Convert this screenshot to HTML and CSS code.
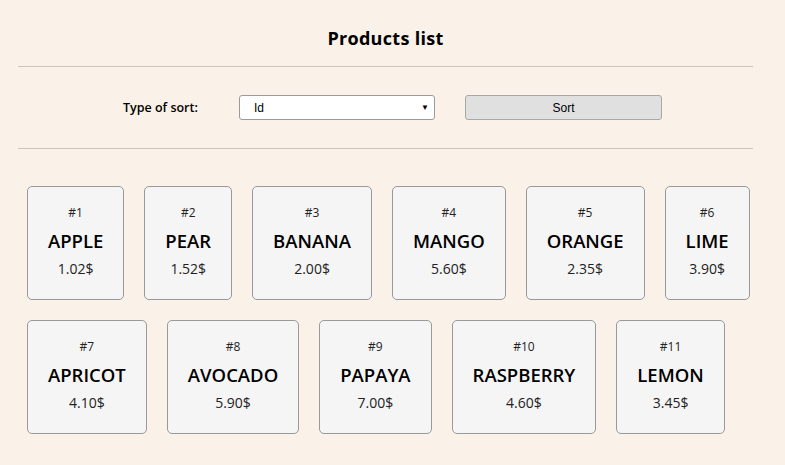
FILE: index.html
```html
<!DOCTYPE html>
<html>
<head>
<meta charset="utf-8">
<link rel="stylesheet" href="styles.css">
</head>
<body>
<div class="page">
  <h1 class="title">Products list</h1>
  <hr class="rule rule-top">
  <div class="controls">
    <label class="sort-label">Type of sort:</label>
    <div class="select"><span>Id</span><span class="arrow">▼</span></div>
    <button class="sort-btn">Sort</button>
  </div>
  <hr class="rule">
  <div class="cards">
    <div class="card"><div class="id">#1</div><div class="name">APPLE</div><div class="price">1.02$</div></div>
    <div class="card"><div class="id">#2</div><div class="name">PEAR</div><div class="price">1.52$</div></div>
    <div class="card"><div class="id">#3</div><div class="name">BANANA</div><div class="price">2.00$</div></div>
    <div class="card"><div class="id">#4</div><div class="name">MANGO</div><div class="price">5.60$</div></div>
    <div class="card"><div class="id">#5</div><div class="name">ORANGE</div><div class="price">2.35$</div></div>
    <div class="card"><div class="id">#6</div><div class="name">LIME</div><div class="price">3.90$</div></div>
    <div class="card"><div class="id">#7</div><div class="name">APRICOT</div><div class="price">4.10$</div></div>
    <div class="card"><div class="id">#8</div><div class="name">AVOCADO</div><div class="price">5.90$</div></div>
    <div class="card"><div class="id">#9</div><div class="name">PAPAYA</div><div class="price">7.00$</div></div>
    <div class="card"><div class="id">#10</div><div class="name">RASPBERRY</div><div class="price">4.60$</div></div>
    <div class="card"><div class="id">#11</div><div class="name">LEMON</div><div class="price">3.45$</div></div>
  </div>
</div>
</body>
</html>
```
FILE: styles.css
```css
html, body {
  margin: 0;
  padding: 0;
  background: #faf1e8;
  font-family: "Open Sans", "DejaVu Sans", sans-serif;
  color: #000;
}
.page {
  width: 735px;
  margin-left: 18px;
  padding-top: 27px;
}
.title {
  margin: 0;
  text-align: center;
  font-size: 18px;
  font-weight: 700;
  line-height: 22px;
  letter-spacing: 0.3px;
}
.rule {
  margin: 0;
  border: 0;
  border-top: 1px solid #c9c5c1;
  height: 0;
}
.rule-top {
  margin-top: 17px;
}
.controls {
  display: flex;
  align-items: center;
  padding-left: 105px;
  height: 81px;
}
.sort-label {
  width: 116px;
  font-size: 12.5px;
  font-weight: 600;
}
.select {
  box-sizing: border-box;
  width: 196px;
  height: 25px;
  background: #fff;
  border: 1px solid #9a9a9a;
  border-radius: 3px;
  display: flex;
  align-items: center;
  justify-content: space-between;
  padding: 0 5px 0 14px;
  font-family: "Liberation Sans", Arial, sans-serif;
  font-size: 12px;
}
.arrow {
  font-size: 8px;
}
.sort-btn {
  box-sizing: border-box;
  margin-left: 30px;
  width: 197px;
  height: 25px;
  background: #e0e0e0;
  border: 1px solid #a8a8a8;
  border-radius: 3px;
  font-family: "Liberation Sans", Arial, sans-serif;
  font-size: 12px;
  color: #000;
  padding: 0;
}
.cards {
  display: flex;
  flex-wrap: wrap;
  gap: 20px;
  padding-left: 9px;
  margin-top: 37px;
}
.card {
  box-sizing: border-box;
  height: 114px;
  padding: 17px 20px 0 20px;
  background: #f5f5f5;
  border: 1px solid #999;
  border-radius: 5px;
  text-align: center;
}
.id {
  font-size: 12px;
  line-height: 18px;
  color: #222;
}
.name {
  margin-top: 8px;
  font-size: 18.5px;
  font-weight: 600;
  line-height: 22px;
}
.price {
  margin-top: 7px;
  font-size: 14px;
  line-height: 20px;
  color: #222;
}
```
